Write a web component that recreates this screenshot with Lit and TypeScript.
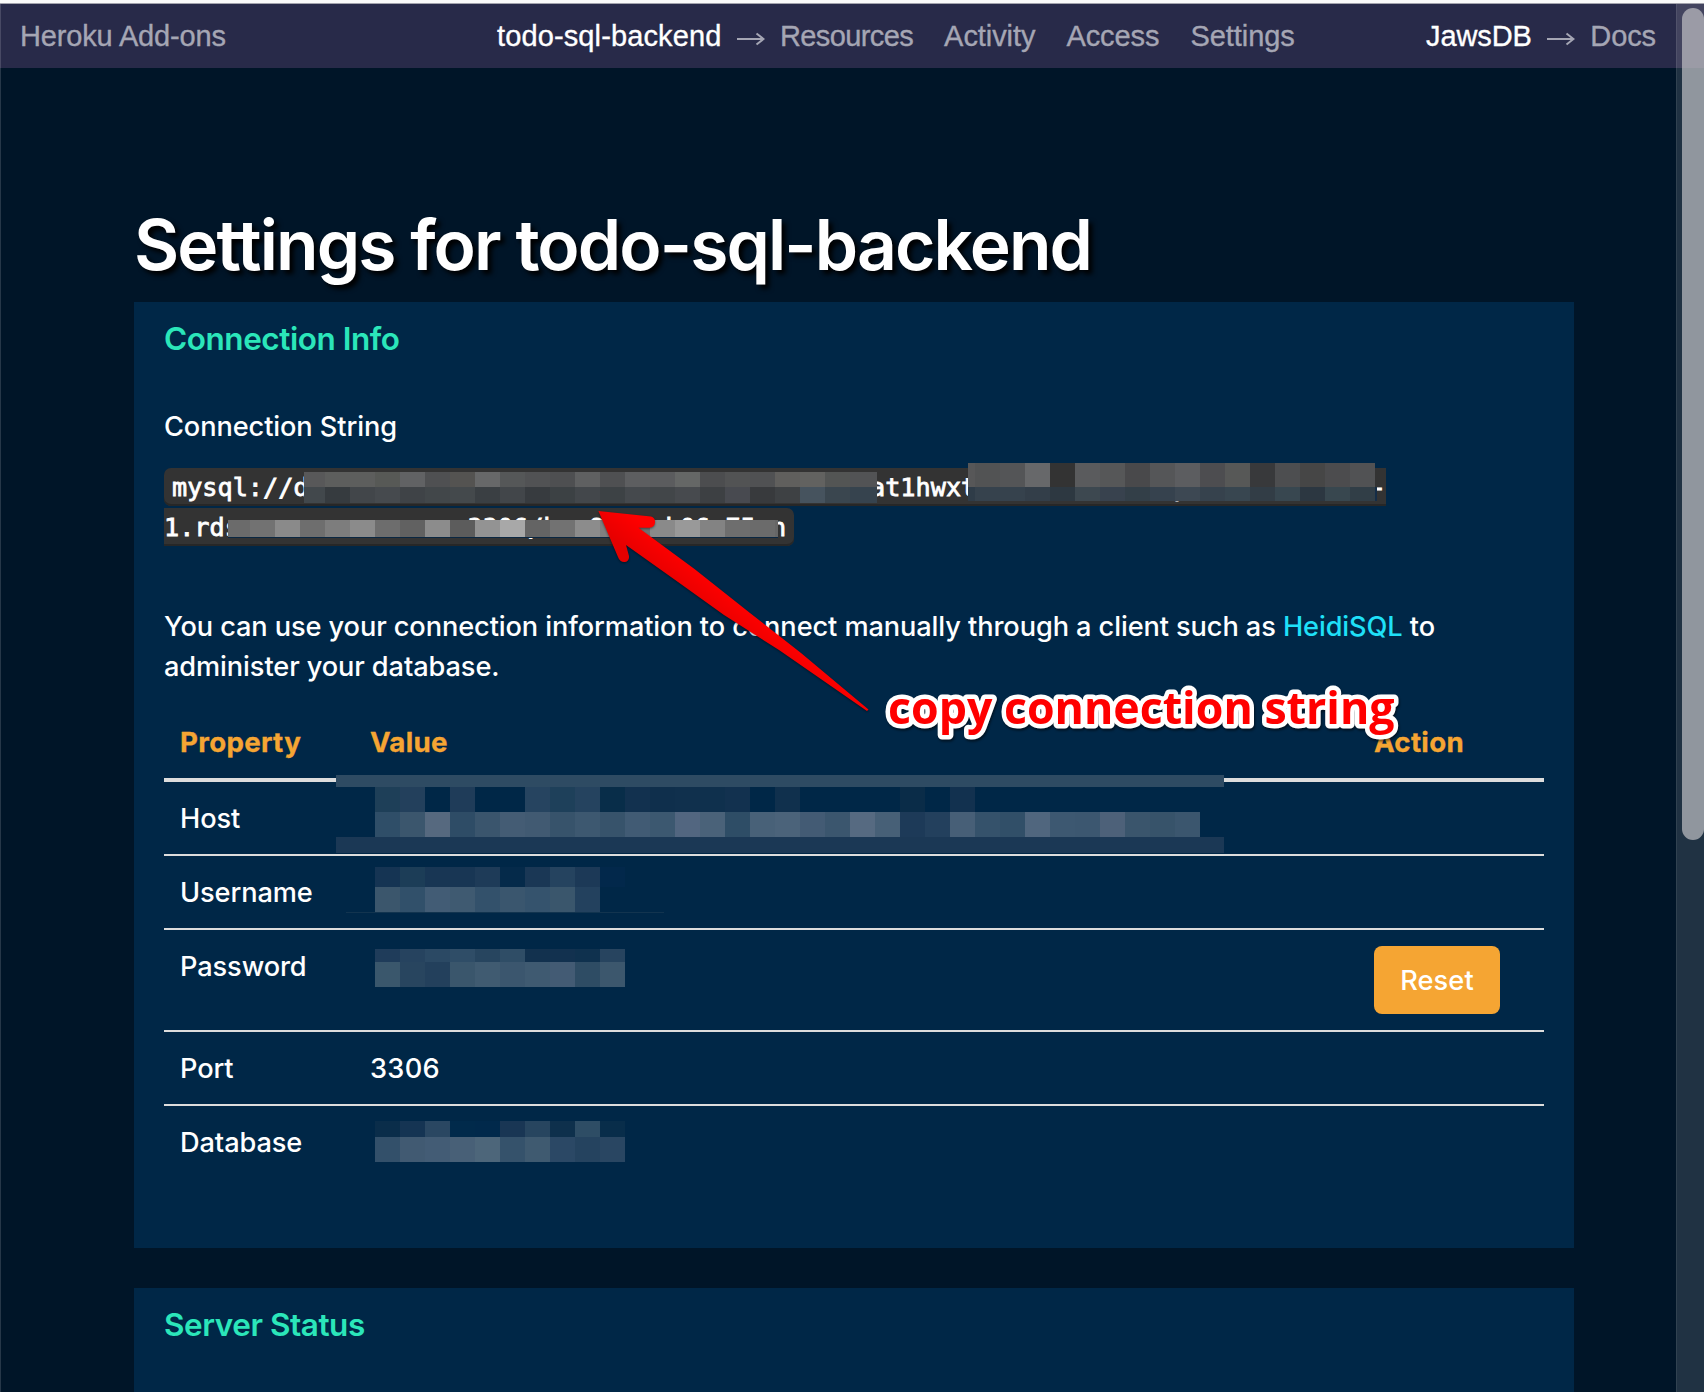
import { LitElement, html, svg, css, nothing } from "lit";

interface MosaicRow {
  y: number;
  height: number;
  /** Left edge of the first cell. */
  x: number;
  /** Width of the first cell, when it is cut by the selection. */
  first?: number;
  /** Right edge where the last cell is cut. */
  end?: number;
  /** Hex colours of 25px cells; "-" leaves a cell clear. */
  cells: string;
}

const CELL = 25;

const MOSAICS: MosaicRow[] = [
  {
    x: 304, y: 472, height: 15, first: 21, end: 877,
    cells:
      "585859 5d5e5d 5d5e5d 575956 616264 4f5052 545351 676869 555758 515254 4e4f51 5f6061 4f5052 5d5e60 5b5c5e 656766 4c4d4f 525354 505153 605f5d 626260 535554 525355 525355",
  },
  {
    x: 304, y: 487, height: 16, first: 21, end: 877,
    cells:
      "42484c 363b3f 42464a 464a4e 3f4347 42474a 44494c 3a3f43 42464a 373b3f 3c4144 43474b 3d4245 45494d 424649 474a4e 3d4043 484a50 383a3d 3e4144 46535e 3a464f 36434e 36434e",
  },
  {
    x: 968, y: 463, height: 24, first: 7, end: 1375,
    cells:
      "575758 525354 545557 67686a 333333 5a5b5d 565758 49494b 555658 5c5d60 4d4d50 575857 38393b 4d4e50 464646 4c4c4e 515254",
  },
  {
    x: 968, y: 487, height: 14, first: 7, end: 1377,
    cells:
      "2f3c48 36424d 36424d 333e49 2d3841 3d4850 38424e 333f48 36424e 3d4853 36424d 384650 323d46 384750 2c3741 38474f 313e47 152d47",
  },
  {
    x: 228, y: 520, height: 17, first: 22, end: 778,
    cells:
      "6b6b6b 727272 8a8a8a 6e6e6e 7d7d7d 8b8b8b 6d6d6d 616161 8c8c8c 5c5c5c 939393 a8a8a8 646464 727272 8c8c8c 808080 707070 8a8a8a 999999 838383 6e6e6e 6b6b6b 666666",
  },
  {
    x: 375, y: 787, height: 25,
    cells:
      "1e3f58 23405c - 1f3c59 - - 264460 1e405a 25435f 082d49 12314f 0f2f4c 10304d 0f304d 12314f - 10304d - - - - 0a2c48 - 12314f",
  },
  {
    x: 375, y: 812, height: 25,
    cells:
      "2f4e68 3b566d 56697f 2e4c66 3a556d 445c74 415a72 37536b 3d5870 37536b 415b74 3c5870 526680 4a6279 2e4d66 486178 4b637a 435b74 3b566e 566a81 476077 1d3a58 23405d 475f77 35526b 314f68 50667e 3d5871 3c5770 4d6179 3a556c 37536a 3b566e",
  },
  { x: 375, y: 867, height: 20, cells: "153453 1c3d57 183654 183654 1e3b58 052a4a 1a3755 25435f 1c3957 02284b" },
  { x: 375, y: 887, height: 25, cells: "3b566c 31506a 425c75 3f5a71 33516b 3a566e 35536d 3a566c 23415e" },
  { x: 375, y: 949, height: 13, cells: "1f3c5a 26435f 2b4964 2f4d67 27455f 2f4d66 12314e 12314f 0f314e 27445f" },
  { x: 375, y: 962, height: 25, cells: "3a576c 28455f 23405c 3a566c 405b71 3b566e 3f5a71 435b74 2e4c64 3c576d" },
  { x: 375, y: 1121, height: 16, cells: "0a2d4a 153453 2a4762 012a4b 01294b 193654 27455f 0e304c 2e4d65 082d4a" },
  { x: 375, y: 1137, height: 25, cells: "33506a 415a72 435c75 486077 4d667a 35526b 3f5a70 2b4865 25435f 294662" },
];

const PROPERTIES: { name: string; value?: string; action?: string }[] = [
  { name: "Host" },
  { name: "Username" },
  { name: "Password", action: "Reset" },
  { name: "Port", value: "3306" },
  { name: "Database" },
];

const gap = (n: number) => "\u00a0".repeat(n);
const CODE_FIRST = "mysql://d" + gap(37) + "at1hwxt" + gap(13) + "p" + gap(12) + "-";
const CODE_SECOND = "1.rds" + gap(15) + "3306/h" + gap(2) + "8" + gap(4) + "k06" + gap(1) + "75" + gap(1) + "n";

class NavBar extends LitElement {
  static styles = css`
    :host {
      display: block;
    }
    .bar {
      display: flex;
      height: 64px;
      box-sizing: border-box;
      padding: 0 48px 0 20px;
      background: #282a49;
      color: #a5a6b4;
      font: 29px/64px "Liberation Sans", Arial, sans-serif;
      -webkit-text-stroke: 0.35px;
      white-space: nowrap;
    }
    .group {
      display: flex;
    }
    .brand {
      width: 477px;
      letter-spacing: -0.15px;
    }
    .addon {
      margin-left: auto;
    }
    .strong {
      color: #fff;
    }
    .name {
      letter-spacing: 0.12px;
    }
    .tight {
      letter-spacing: -0.6px;
    }
    .links {
      display: flex;
      gap: 31px;
      letter-spacing: -0.07px;
    }
    svg {
      width: 28px;
      height: 14px;
      margin: 27.5px 15px 0 15.5px;
      fill: none;
      stroke: #a5a6b4;
      stroke-width: 2;
    }
  `;

  private arrow() {
    return html`<svg viewBox="0 0 28 14"><path d="M0 7H26.5M19.500 1.500L26.500 7L19.500 12.500" /></svg>`;
  }

  render() {
    return html`
      <nav class="bar">
        <span class="brand">Heroku Add-ons</span>
        <div class="group">
          <span class="strong name">todo-sql-backend</span>
          ${this.arrow()}
          <div class="links">
            <span class="tight">Resources</span><span>Activity</span><span>Access</span><span>Settings</span>
          </div>
        </div>
        <div class="group addon"><span class="strong">JawsDB</span>${this.arrow()}<span>Docs</span></div>
      </nav>
    `;
  }
}
customElements.define("nav-bar", NavBar);

class MarkupLayer extends LitElement {
  static styles = css`
    :host {
      display: block;
    }
    svg {
      display: block;
      width: 1704px;
      height: 1392px;
    }
    .note {
      font: 700 44.7px "Open Sans", "Noto Sans", sans-serif;
      fill: #f00;
      stroke: #fff;
      stroke-width: 9px;
      stroke-linejoin: round;
      paint-order: stroke;
      filter: drop-shadow(1px 2px 1px rgba(0, 0, 0, 0.5));
    }
    .arrow {
      filter: drop-shadow(0 1px 1px rgba(0, 0, 0, 0.45));
    }
  `;

  private mosaic(row: MosaicRow) {
    const colours = row.cells.split(" ");
    const first = row.first ?? CELL;
    return colours.map((c, i) => {
      if (c === "-") return nothing;
      const x = i === 0 ? row.x : row.x + first + (i - 1) * CELL;
      let w = i === 0 ? first : CELL;
      if (row.end !== undefined) w = Math.min(w, row.end - x);
      return svg`<rect x=${x} y=${row.y} width=${w} height=${row.height} fill=${"#" + c} />`;
    });
  }

  render() {
    return html`
      <svg viewBox="0 0 1704 1392">
        <defs>
          <linearGradient id="red" gradientUnits="userSpaceOnUse" x1="690" y1="600" x2="709" y2="576">
            <stop offset="0" stop-color="#e60000" />
            <stop offset="1" stop-color="#ff0000" />
          </linearGradient>
        </defs>
        <g shape-rendering="crispEdges">
          <rect x="336" y="775" width="888" height="78" fill="#002747" />
          <rect x="336" y="775" width="888" height="12" fill="#2e4b63" />
          <rect x="336" y="837" width="888" height="16" fill="#1b3855" />
          <rect x="346" y="912" width="318" height="1" fill="#12344f" />
          <rect x="228" y="537" width="550" height="1" fill="#0a2742" />
          ${MOSAICS.map((m) => this.mosaic(m))}
        </g>
        <path
          class="arrow"
          fill="url(#red)"
          d="M598.4 511L651 516.6Q655.5 518 655 522.5Q654.5 527.5 649.5 527.8L638.5 527.8L694.5 569L750 613L801 653L868.5 709.5L867 711L779 650L724 615L678 582L626 545L629 556Q629.5 561 625 562Q620 562.5 618 557Z"
        />
        <text class="note" x="888" y="723.5">copy connection string</text>
      </svg>
    `;
  }
}
customElements.define("markup-layer", MarkupLayer);

class AppRoot extends LitElement {
  static styles = css`
    :host {
      display: block;
    }
    .window {
      position: relative;
      display: flex;
      flex-direction: column;
      width: 1704px;
      height: 1392px;
      overflow: hidden;
      background: #001528;
      color: #fff;
      font: 450 27.2px/40px Inter, "Open Sans", sans-serif;
      letter-spacing: -0.1px;
    }
    .edge {
      flex: none;
      height: 3px;
      background: #fafafa;
      border-bottom: 1px solid #a3a3ad;
    }
    .page {
      display: flex;
      flex-direction: column;
      padding: 135px 130px 0 134px;
    }
    h1 {
      margin: 0;
      height: 99px;
      font-size: 69.5px;
      line-height: 84px;
      font-weight: 600;
      letter-spacing: -1.88px;
      white-space: nowrap;
      text-shadow: 4px 4px 5px #000;
    }
    .panel {
      box-sizing: border-box;
      padding: 17px 30px 0;
      background: #002747;
    }
    .connection {
      height: 946px;
      margin-bottom: 40px;
    }
    .status {
      height: 200px;
    }
    h2 {
      margin: 0 0 48px;
      font-size: 31.5px;
      line-height: 40px;
      font-weight: 600;
      letter-spacing: -0.45px;
      color: #2be6ba;
    }
    p {
      margin: 0;
    }
    .code {
      display: flex;
      flex-direction: column;
      align-items: flex-start;
      gap: 2px;
      margin: 21px 0 61px;
      font: 25.2px/39px "DejaVu Sans Mono", "Liberation Mono", monospace;
      letter-spacing: 0.01px;
      -webkit-text-stroke: 0.8px #fff;
      white-space: pre;
    }
    .line {
      height: 38px;
      background: #333;
      box-shadow: inset 0 -2px 0 #272727;
    }
    .first {
      padding-left: 8px;
      border-radius: 7px 0 0 7px;
    }
    .last {
      padding-right: 8px;
      border-radius: 0 7px 7px 0;
    }
    .link {
      color: #1fe0f8;
    }
    .table {
      display: grid;
      grid-template-columns: 190px 1004px 1fr;
      margin-top: 19px;
    }
    .cell {
      padding: 17px 16px 15px;
      border-top: 2px solid #ddd;
    }
    .head {
      padding: 16px;
      border-top: 0;
      border-bottom: 4px solid #ddd;
      color: #f5a533;
      font-size: 27.7px;
      font-weight: 700;
      letter-spacing: 0.3px;
      -webkit-text-stroke: 0.3px;
    }
    .top {
      border-top: 0;
    }
    .number {
      letter-spacing: 0.3px;
    }
    .control {
      padding: 16px;
    }
    .button {
      display: block;
      width: 126px;
      height: 68px;
      padding: 2px 0 0;
      border: 0;
      border-radius: 8px;
      background: #f5a533;
      color: #fff;
      font: inherit;
      letter-spacing: 0.1px;
    }
    .overlay {
      position: absolute;
      left: 0;
      top: 0;
      letter-spacing: 0;
    }
    .left-edge {
      position: absolute;
      left: 0;
      top: 4px;
      bottom: 0;
      width: 1px;
      background: rgba(255, 255, 255, 0.15);
    }
    .scrollbar {
      position: absolute;
      right: 0;
      top: 4px;
      bottom: 0;
      width: 28px;
      box-sizing: border-box;
      padding: 4px 0 0 5px;
      background: rgba(255, 255, 255, 0.125);
      border-left: 1px solid rgba(255, 255, 255, 0.08);
    }
    .thumb {
      width: 22px;
      height: 832px;
      border-radius: 11px;
      background: rgba(193, 193, 196, 0.7);
    }
  `;

  render() {
    return html`
      <div class="window">
        <div class="edge"></div>
        <nav-bar></nav-bar>
        <main class="page">
          <h1>Settings for todo-sql-backend</h1>
          <section class="panel connection">
            <h2>Connection Info</h2>
            <p>Connection String</p>
            <div class="code"><span class="line first">${CODE_FIRST}</span><span class="line last">${CODE_SECOND}</span></div>
            <p>
              You can use your connection information to connect manually through a client such as
              <span class="link">HeidiSQL</span> to<br />administer your database.
            </p>
            <div class="table">
              <div class="cell head">Property</div>
              <div class="cell head">Value</div>
              <div class="cell head">Action</div>
              ${PROPERTIES.map((p, i) => {
                const cls = i === 0 ? "cell top" : "cell";
                return html`
                  <div class=${cls}>${p.name}</div>
                  <div class="${cls} number">${p.value ?? nothing}</div>
                  <div class="${cls} control">
                    ${p.action ? html`<button class="button">${p.action}</button>` : nothing}
                  </div>
                `;
              })}
            </div>
          </section>
          <section class="panel status">
            <h2>Server Status</h2>
          </section>
        </main>
        <markup-layer class="overlay"></markup-layer>
        <div class="left-edge"></div>
        <div class="scrollbar"><div class="thumb"></div></div>
      </div>
    `;
  }
}
customElements.define("app-root", AppRoot);
